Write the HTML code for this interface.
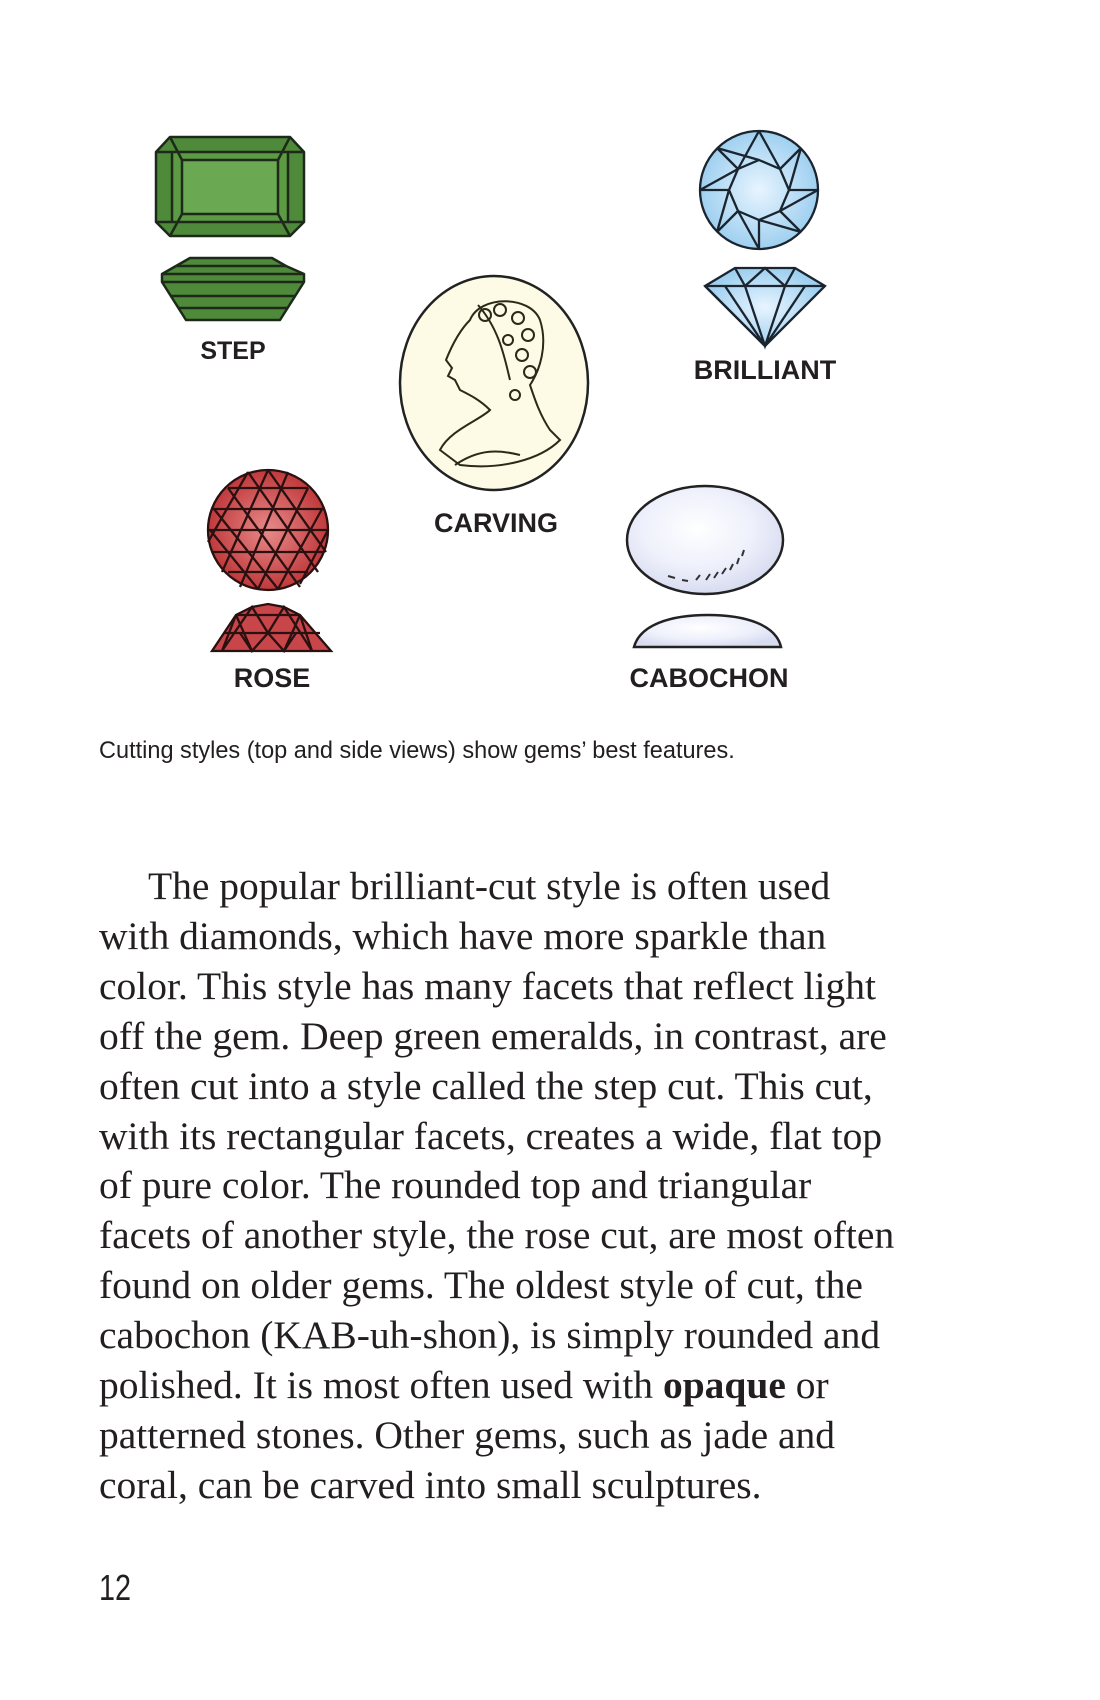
<!DOCTYPE html>
<html><head><meta charset="utf-8"><style>
body{margin:0;background:#fff;width:1100px;height:1700px;position:relative;overflow:hidden}
.lbl{position:absolute;font-family:"Liberation Sans",sans-serif;font-weight:bold;font-size:27px;color:#231f20;transform:translateX(-50%);white-space:nowrap;line-height:1}
.cap{position:absolute;left:99px;top:737px;font-family:"Liberation Sans",sans-serif;font-size:24px;color:#231f20;transform:scaleX(0.98);transform-origin:left top;white-space:nowrap}
.body{position:absolute;left:99px;top:862px;font-family:"Liberation Serif",serif;font-size:39.5px;line-height:49.9px;color:#231f20;white-space:nowrap}
.pn{position:absolute;left:99px;top:1567px;font-family:"Liberation Sans",sans-serif;font-size:36px;color:#231f20;transform:scaleX(0.8);transform-origin:left top}
</style></head><body>
<svg width="1100" height="720" style="position:absolute;left:0;top:0">
<defs>
<radialGradient id="bl" cx="50%" cy="50%" r="50%"><stop offset="0" stop-color="#e8f4ff"/><stop offset="1" stop-color="#9fd0f0"/></radialGradient>
<radialGradient id="rd" cx="50%" cy="50%" r="50%"><stop offset="0" stop-color="#e88a8a"/><stop offset="1" stop-color="#c0393b"/></radialGradient>
<radialGradient id="pe" cx="45%" cy="40%" r="60%"><stop offset="0" stop-color="#ffffff"/><stop offset=".6" stop-color="#eef0fb"/><stop offset="1" stop-color="#d8dcf0"/></radialGradient>
</defs>
<g stroke="#1d2a1a" stroke-width="2.5" stroke-linejoin="round">
<polygon points="170,137 290,137 304,152 304,222 290,236 170,236 156,222 156,152" fill="#4e8a3a"/>
<rect x="172" y="152" width="116" height="70" fill="#5c9a44"/>
<rect x="182" y="160" width="96" height="54" fill="#6aa852"/>
<line x1="156" y1="152" x2="172" y2="152"/><line x1="288" y1="152" x2="304" y2="152"/>
<line x1="156" y1="222" x2="172" y2="222"/><line x1="288" y1="222" x2="304" y2="222"/>
<line x1="170" y1="137" x2="182" y2="160"/><line x1="290" y1="137" x2="278" y2="160"/>
<line x1="170" y1="236" x2="182" y2="214"/><line x1="290" y1="236" x2="278" y2="214"/>
<polygon points="190,258 272,258 286,266 304,274 304,282 280,320 186,320 162,282 162,274 176,266" fill="#4e8a3a"/>
<line x1="176" y1="266" x2="286" y2="266"/><line x1="162" y1="274" x2="304" y2="274"/>
<line x1="162" y1="282" x2="304" y2="282"/><line x1="170" y1="296" x2="296" y2="296"/><line x1="178" y1="308" x2="288" y2="308"/>
</g>
<g stroke="#1a2530" stroke-width="2.3" fill="none">
<circle cx="759" cy="190" r="59" fill="url(#bl)"/>
<polygon points="759,160 780,169 789,190 780,211 759,220 738,211 729,190 738,169"/>
<path d="M759,131 L738,169 M759,131 L780,169 M801,148 L780,169 M801,148 L789,190 M818,190 L789,190 M818,190 L780,211 M801,232 L780,211 M801,232 L759,220 M759,249 L759,220 M759,249 L738,211 M717,232 L738,211 M717,232 L729,190 M700,190 L729,190 M700,190 L738,169 M717,148 L738,169 M717,148 L759,160"/>
<polygon points="735,268 795,268 825,286 765,346 705,286" fill="url(#bl)"/>
<path d="M705,286 L825,286 M735,268 L745,286 L765,268 L785,286 L795,268 M745,286 L765,346 L785,286 M725,286 L765,346 L805,286 M705,286 L765,346"/>
</g>
<ellipse cx="494" cy="383" rx="94" ry="107" fill="#fdfbe6" stroke="#222" stroke-width="2.5"/>
<g stroke="#2a2a1a" stroke-width="2" fill="none">
<path d="M470,320 C480,295 530,295 540,320 C548,345 540,370 530,385 C535,400 540,415 550,430 L560,440 C540,460 500,470 460,465 L440,450 C450,430 480,420 490,410 C480,400 470,395 460,390 L455,380 L448,376 L452,368 L446,360 C452,345 460,330 470,320 Z"/>
<circle cx="485" cy="315" r="6"/><circle cx="500" cy="310" r="6"/><circle cx="518" cy="318" r="6"/><circle cx="528" cy="335" r="6"/><circle cx="522" cy="355" r="6"/><circle cx="530" cy="372" r="6"/><circle cx="508" cy="340" r="5"/><circle cx="515" cy="395" r="5"/>
<path d="M478,305 C500,330 505,360 510,380"/>
<path d="M455,465 C480,448 500,450 520,455"/>
</g>
<g stroke="#2a1010" stroke-width="2.3">
<circle cx="268" cy="530" r="60" fill="url(#rd)"/>
<path d="M212,509 L324,509 M208,530 L328,530 M212,552 L324,552 M228,488 L308,488 M228,572 L308,572" fill="none"/>
<path d="M248,472 L208,542 M268,470 L222,572 M288,472 L240,587 M308,488 L258,589 M322,509 L278,589 M328,530 L300,584 M228,488 L300,587 M248,472 L318,572 M268,470 L326,552 M214,509 L278,589 M210,530 L258,589" fill="none"/>
<polygon points="212,651 236,615 252,607 268,604 284,607 300,615 331,651" fill="#c8464a"/>
<path d="M236,615 L300,615 M224,633 L320,633 M236,615 L222,651 L252,607 L268,633 L284,607 L312,651 L300,615 M236,615 L252,651 L268,633 L284,651 L300,615 M240,633 L252,651 M296,633 L284,651" fill="none"/>
</g>
<ellipse cx="705" cy="540" rx="78" ry="54" fill="url(#pe)" stroke="#222" stroke-width="2.5"/>
<path d="M668,576 L675,578 M682,580 L688,581 M696,580 L700,575 M706,580 L710,574 M714,578 L718,572 M722,574 L726,568 M730,570 L733,564 M737,564 L739,558 M742,556 L744,550" stroke="#333" stroke-width="2"/>
<path d="M634,647 C640,625 670,615 708,615 C746,615 776,625 781,647 Z" fill="url(#pe)" stroke="#222" stroke-width="2.5"/>
</svg>
<div class="lbl" style="left:233px;top:339px;font-size:25px">STEP</div>
<div class="lbl" style="left:765px;top:357px">BRILLIANT</div>
<div class="lbl" style="left:496px;top:510px">CARVING</div>
<div class="lbl" style="left:272px;top:665px">ROSE</div>
<div class="lbl" style="left:709px;top:665px">CABOCHON</div>
<div class="cap">Cutting styles (top and side views) show gems’ best features.</div>
<div class="body"><span style="padding-left:49px"></span>The popular brilliant-cut style is often used<br>with diamonds, which have more sparkle than<br>color. This style has many facets that reflect light<br>off the gem. Deep green emeralds, in contrast, are<br>often cut into a style called the step cut. This cut,<br>with its rectangular facets, creates a wide, flat top<br>of pure color. The rounded top and triangular<br>facets of another style, the rose cut, are most often<br>found on older gems. The oldest style of cut, the<br>cabochon (KAB-uh-shon), is simply rounded and<br>polished. It is most often used with <b>opaque</b> or<br>patterned stones. Other gems, such as jade and<br>coral, can be carved into small sculptures.</div>
<div class="pn">12</div>
</body></html>
